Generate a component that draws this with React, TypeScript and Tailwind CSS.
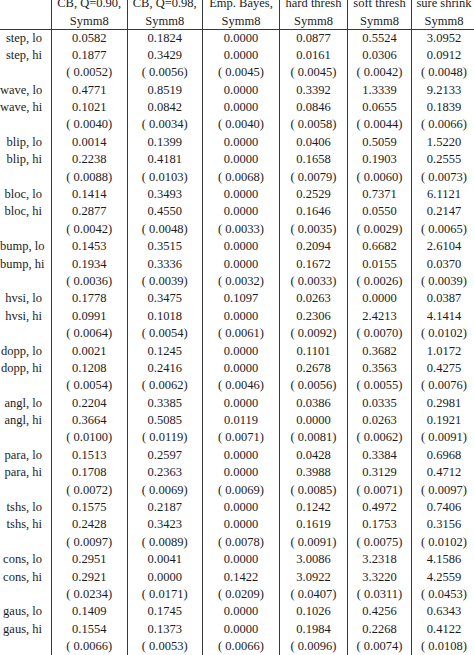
const cols = [
  { title: "CB, Q=0.90,", sub: "Symm8" },
  { title: "CB, Q=0.98,", sub: "Symm8" },
  { title: "Emp. Bayes,", sub: "Symm8" },
  { title: "hard thresh", sub: "Symm8" },
  { title: "soft thresh", sub: "Symm8" },
  { title: "sure shrink", sub: "Symm8" },
]

// [name, lo values, hi values, std errors]
const signals: [string, string[], string[], string[]][] = [
  ["step", ["0.0582", "0.1824", "0.0000", "0.0877", "0.5524", "3.0952"], ["0.1877", "0.3429", "0.0000", "0.0161", "0.0306", "0.0912"], ["0.0052", "0.0056", "0.0045", "0.0045", "0.0042", "0.0048"]],
  ["wave", ["0.4771", "0.8519", "0.0000", "0.3392", "1.3339", "9.2133"], ["0.1021", "0.0842", "0.0000", "0.0846", "0.0655", "0.1839"], ["0.0040", "0.0034", "0.0040", "0.0058", "0.0044", "0.0066"]],
  ["blip", ["0.0014", "0.1399", "0.0000", "0.0406", "0.5059", "1.5220"], ["0.2238", "0.4181", "0.0000", "0.1658", "0.1903", "0.2555"], ["0.0088", "0.0103", "0.0068", "0.0079", "0.0060", "0.0073"]],
  ["bloc", ["0.1414", "0.3493", "0.0000", "0.2529", "0.7371", "6.1121"], ["0.2877", "0.4550", "0.0000", "0.1646", "0.0550", "0.2147"], ["0.0042", "0.0048", "0.0033", "0.0035", "0.0029", "0.0065"]],
  ["bump", ["0.1453", "0.3515", "0.0000", "0.2094", "0.6682", "2.6104"], ["0.1934", "0.3336", "0.0000", "0.1672", "0.0155", "0.0370"], ["0.0036", "0.0039", "0.0032", "0.0033", "0.0026", "0.0039"]],
  ["hvsi", ["0.1778", "0.3475", "0.1097", "0.0263", "0.0000", "0.0387"], ["0.0991", "0.1018", "0.0000", "0.2306", "2.4213", "4.1414"], ["0.0064", "0.0054", "0.0061", "0.0092", "0.0070", "0.0102"]],
  ["dopp", ["0.0021", "0.1245", "0.0000", "0.1101", "0.3682", "1.0172"], ["0.1208", "0.2416", "0.0000", "0.2678", "0.3563", "0.4275"], ["0.0054", "0.0062", "0.0046", "0.0056", "0.0055", "0.0076"]],
  ["angl", ["0.2204", "0.3385", "0.0000", "0.0386", "0.0335", "0.2981"], ["0.3664", "0.5085", "0.0119", "0.0000", "0.0263", "0.1921"], ["0.0100", "0.0119", "0.0071", "0.0081", "0.0062", "0.0091"]],
  ["para", ["0.1513", "0.2597", "0.0000", "0.0428", "0.3384", "0.6968"], ["0.1708", "0.2363", "0.0000", "0.3988", "0.3129", "0.4712"], ["0.0072", "0.0069", "0.0069", "0.0085", "0.0071", "0.0097"]],
  ["tshs", ["0.1575", "0.2187", "0.0000", "0.1242", "0.4972", "0.7406"], ["0.2428", "0.3423", "0.0000", "0.1619", "0.1753", "0.3156"], ["0.0097", "0.0089", "0.0078", "0.0091", "0.0075", "0.0102"]],
  ["cons", ["0.2951", "0.0041", "0.0000", "3.0086", "3.2318", "4.1586"], ["0.2921", "0.0000", "0.1422", "3.0922", "3.3220", "4.2559"], ["0.0234", "0.0171", "0.0209", "0.0407", "0.0311", "0.0453"]],
  ["gaus", ["0.1409", "0.1745", "0.0000", "0.1026", "0.4256", "0.6343"], ["0.1554", "0.1373", "0.0000", "0.1984", "0.2268", "0.4122"], ["0.0066", "0.0053", "0.0066", "0.0096", "0.0074", "0.0108"]],
]

const grid = "grid grid-cols-[52px_75.5px_75.5px_77px_68px_64px_64px]"
const cell = "text-center border-r border-[#3a3a3a] whitespace-nowrap"
const lastCell = "text-center whitespace-nowrap"

const Row = ({ label, values }: { label: string; values: string[] }) => (
  <div className={`${grid} h-[17.4px] leading-[17.4px]`}>
    <div className="text-right pr-[9px] border-r border-[#3a3a3a] whitespace-nowrap">{label}</div>
    {values.map((v, i) => (
      <div key={i} className={i === values.length - 1 ? lastCell : cell}>
        {v}
      </div>
    ))}
  </div>
)

export default function App() {
  return (
    <div
      className="w-[474px] h-[655px] overflow-hidden bg-white text-[#1c1c1c] text-[12.5px]"
      style={{ fontFamily: '"Liberation Serif", "Times New Roman", serif' }}
    >
      <div className="w-[476px] -mt-[5.5px]">
        <div className={`${grid} h-[17.5px] leading-[17.5px]`}>
          <div className="border-r border-[#3a3a3a]" />
          {cols.map((c, i) => (
            <div key={i} className={i === cols.length - 1 ? lastCell : cell}>
              {c.title}
            </div>
          ))}
        </div>
        <div className={`${grid} h-[17.5px] leading-[18px] border-b border-[#3a3a3a]`}>
          <div className="border-r border-[#3a3a3a]" />
          {cols.map((c, i) => (
            <div key={i} className={i === cols.length - 1 ? lastCell : cell}>
              {c.sub}
            </div>
          ))}
        </div>
        {signals.map(([name, lo, hi, se]) => (
          <div key={name}>
            <Row label={`${name}, lo`} values={lo} />
            <Row label={`${name}, hi`} values={hi} />
            <Row label="" values={se.map((s) => `( ${s})`)} />
          </div>
        ))}
      </div>
    </div>
  )
}
